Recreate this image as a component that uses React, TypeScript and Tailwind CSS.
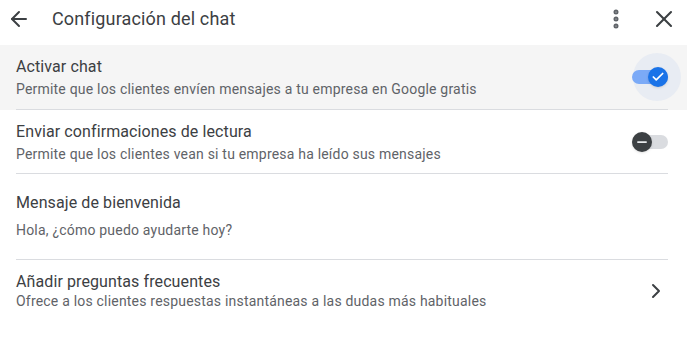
import { ArrowLeft, MoreVertical, X, ChevronRight, Check, Minus } from 'lucide-react';

function ToggleOn() {
  return (
    <div className="relative w-9 h-5 flex items-center">
      <div className="absolute w-12 h-12 rounded-full bg-[#e8ecf3] left-[1px] top-1/2 -translate-y-1/2" />
      <div className="absolute left-0 right-0 h-3.5 rounded-full bg-[#7baaf7]" />
      <div className="absolute right-0 w-5 h-5 rounded-full bg-[#1a73e8] flex items-center justify-center shadow">
        <Check className="w-3.5 h-3.5 text-white" strokeWidth={3} />
      </div>
    </div>
  );
}

function ToggleOff() {
  return (
    <div className="relative w-9 h-5 flex items-center">
      <div className="absolute left-0 right-0 h-3.5 rounded-full bg-[#dadce0]" />
      <div className="absolute left-0 w-5 h-5 rounded-full bg-[#3c4043] flex items-center justify-center shadow">
        <Minus className="w-3.5 h-3.5 text-[#e8eaed]" strokeWidth={3} />
      </div>
    </div>
  );
}

export default function App() {
  return (
    <div className="w-[687px] h-[338px] bg-white font-['Roboto',sans-serif] text-[#3c4043] overflow-hidden">
      {/* Header */}
      <div className="h-[45px] flex items-center pl-[7px] pr-[9px]">
        <ArrowLeft className="w-6 h-6 text-[#3c4043] -mt-2" strokeWidth={2} />
        <h1 className="ml-[21px] text-[18px] leading-6 tracking-[0.15px] text-[#3c4043] -mt-2">Configuración del chat</h1>
        <div className="ml-auto flex items-center -mt-2">
          <MoreVertical className="w-6 h-6 text-[#5f6368]" strokeWidth={3} />
          <X className="ml-[22px] w-7 h-7 text-[#3c4043]" strokeWidth={1.8} />
        </div>
      </div>

      {/* Activar chat */}
      <div className="bg-[#f5f5f5]">
        <div className="ml-4 mr-[19px] py-[10px] flex items-center border-b border-[#dadce0] h-[65px]">
          <div className="flex-1">
            <div className="text-[16px] leading-6 tracking-[0.1px]">Activar chat</div>
            <div className="text-[14px] leading-5 tracking-[0.2px] text-[#5f6368]">Permite que los clientes envíen mensajes a tu empresa en Google gratis</div>
          </div>
          <ToggleOn />
        </div>
      </div>

      {/* Confirmaciones */}
      <div className="ml-4 mr-[19px] py-[10px] flex items-center border-b border-[#dadce0] h-[64px]">
        <div className="flex-1">
          <div className="text-[16px] leading-6 tracking-[0.1px]">Enviar confirmaciones de lectura</div>
          <div className="text-[14px] leading-5 tracking-[0.2px] text-[#5f6368]">Permite que los clientes vean si tu empresa ha leído sus mensajes</div>
        </div>
        <ToggleOff />
      </div>

      {/* Bienvenida */}
      <div className="ml-4 mr-[19px] pt-[17px] pb-4 border-b border-[#dadce0] h-[86px]">
        <div className="text-[16px] leading-6 tracking-[0.1px]">Mensaje de bienvenida</div>
        <div className="mt-[5px] text-[14px] leading-5 tracking-[0.2px] text-[#5f6368]">Hola, ¿cómo puedo ayudarte hoy?</div>
      </div>

      {/* Preguntas */}
      <div className="ml-4 mr-[19px] py-[10px] flex items-center">
        <div className="flex-1">
          <div className="text-[16px] leading-6 tracking-[0.1px]">Añadir preguntas frecuentes</div>
          <div className="text-[14px] leading-5 tracking-[0.2px] text-[#5f6368] -mt-[3px]">Ofrece a los clientes respuestas instantáneas a las dudas más habituales</div>
        </div>
        <ChevronRight className="w-6 h-6 text-[#3c4043]" strokeWidth={2} />
      </div>
    </div>
  );
}
